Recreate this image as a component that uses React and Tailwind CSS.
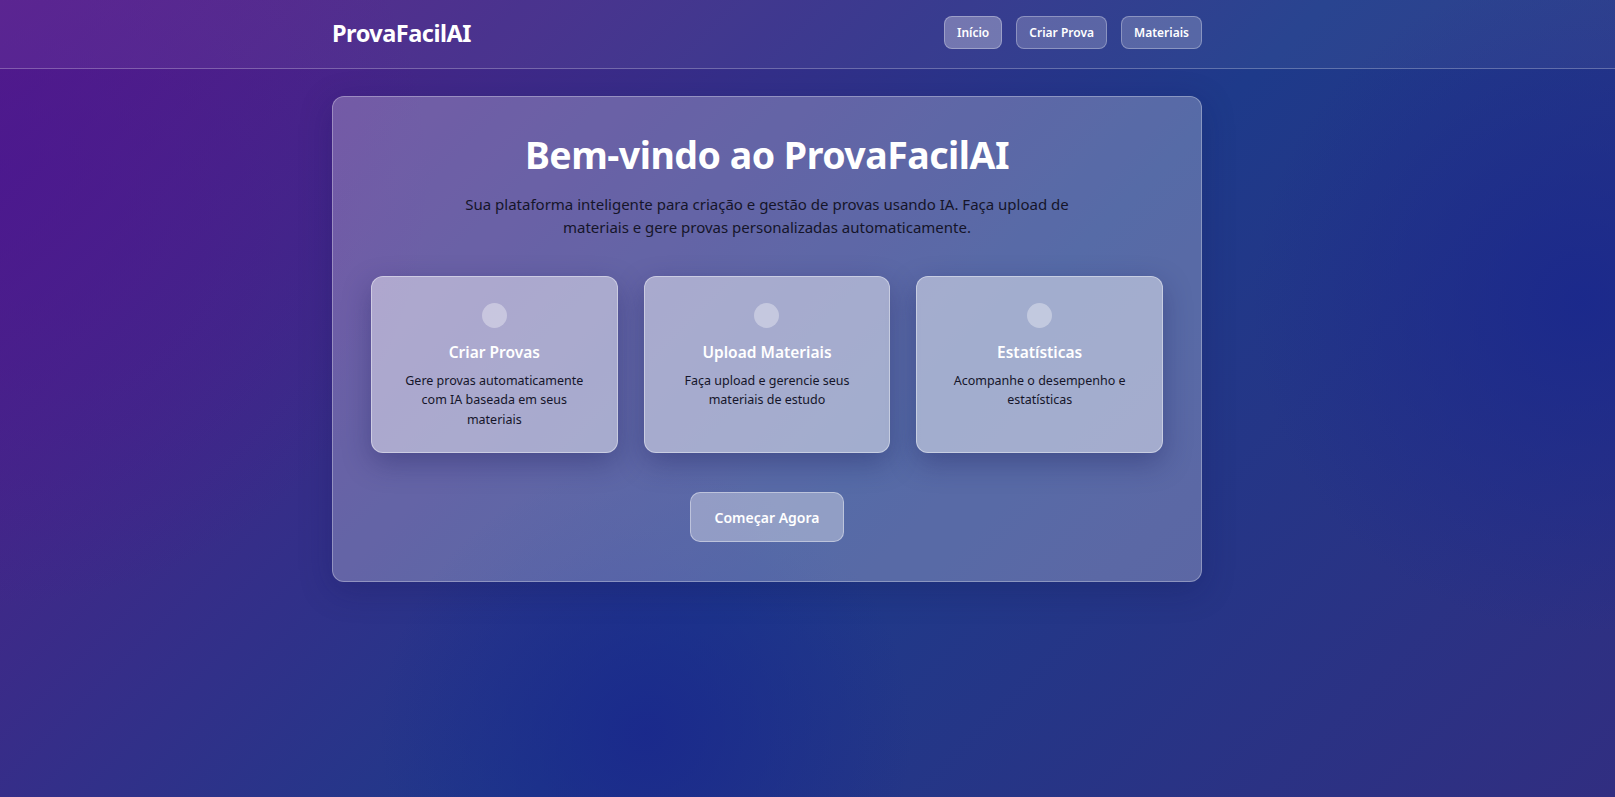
import React from "react";

const features = [
  {
    title: "Criar Provas",
    desc: "Gere provas automaticamente com IA baseada em seus materiais",
  },
  {
    title: "Upload Materiais",
    desc: "Faça upload e gerencie seus materiais de estudo",
  },
  {
    title: "Estatísticas",
    desc: "Acompanhe o desempenho e estatísticas",
  },
];

export default function App() {
  return (
    <div
      className="min-h-screen w-full bg-[radial-gradient(circle_at_0%_22%,rgba(74,22,145,0.7),transparent_25%),radial-gradient(circle_at_40%_92%,rgba(26,40,140,0.9),transparent_22%),radial-gradient(circle_at_98%_38%,rgba(26,40,140,0.9),transparent_20%),linear-gradient(135deg,#581c87_0%,#1e3a8a_55%,#312e81_100%)]"
      style={{ fontFamily: '"Noto Sans", "Open Sans", sans-serif' }}
    >
      <header className="border-b border-white/25 bg-white/5">
        <div className="ml-[332px] w-[870px] h-[68px] flex items-center justify-between">
          <div className="text-[23.5px] font-bold text-white tracking-[-0.5px]">ProvaFacilAI</div>
          <nav className="mb-[3px] flex items-center gap-[14px]">
            <button className="h-[33px] px-[12px] rounded-[8px] bg-white/30 border border-white/30 text-white text-[12px] font-semibold">
              Início
            </button>
            <button className="h-[33px] px-[12px] rounded-[8px] bg-white/20 border border-white/30 text-white text-[12px] font-semibold">
              Criar Prova
            </button>
            <button className="h-[33px] px-[12px] rounded-[8px] bg-white/20 border border-white/30 text-white text-[12px] font-semibold">
              Materiais
            </button>
          </nav>
        </div>
      </header>

      <main className="pt-[27px] pb-10">
        <section className="ml-[332px] w-[870px] rounded-[12px] border border-white/30 bg-white/25 px-[38px] pt-[34px] pb-[39px] shadow-[0_8px_32px_rgba(20,20,80,0.25)]">
          <h1 className="text-center text-[37.5px] leading-[48px] font-bold text-white tracking-[-0.5px]">
            Bem-vindo ao ProvaFacilAI
          </h1>
          <p className="mx-auto mt-[14px] max-w-[615px] text-center text-[15px] leading-[23px] text-[#15152a]">
            Sua plataforma inteligente para criação e gestão de provas usando IA. Faça upload de materiais e gere provas personalizadas automaticamente.
          </p>

          <div className="mt-[37px] grid grid-cols-3 gap-[26px]">
            {features.map((f) => (
              <div
                key={f.title}
                className="h-[177px] rounded-[12px] border border-white/40 bg-white/45 px-[22px] pt-[26px] flex flex-col items-center text-center shadow-[0_10px_28px_rgba(25,25,90,0.35)]"
              >
                <div className="w-[25px] h-[25px] rounded-full bg-white/35" />
                <h3 className="mt-[12px] text-[15.5px] leading-[24px] font-semibold text-white">{f.title}</h3>
                <p className="mt-[7px] text-[12.5px] leading-[19.3px] text-[#15152a]">{f.desc}</p>
              </div>
            ))}
          </div>

          <div className="mt-[39px] flex justify-center">
            <button className="w-[154px] h-[50px] rounded-[10px] border border-white/40 bg-white/35 text-white text-[14px] font-semibold">
              Começar Agora
            </button>
          </div>
        </section>
      </main>
    </div>
  );
}
